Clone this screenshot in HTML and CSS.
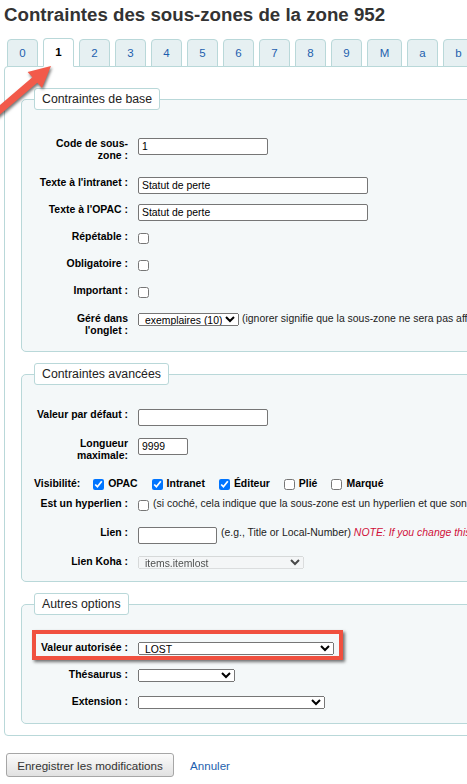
FILE: index.html
```html
<!DOCTYPE html>
<html lang="fr">
<head>
<meta charset="utf-8">
<title>Contraintes des sous-zones</title>
<link rel="stylesheet" href="styles.css">
</head>
<body>
<div class="page">
  <h1 class="title">Contraintes des sous-zones de la zone 952</h1>
  <ul class="tabs">
    <li class="tab">0</li>
    <li class="tab tab-active">1</li>
    <li class="tab">2</li>
    <li class="tab">3</li>
    <li class="tab">4</li>
    <li class="tab">5</li>
    <li class="tab">6</li>
    <li class="tab">7</li>
    <li class="tab">8</li>
    <li class="tab">9</li>
    <li class="tab tab-wide">M</li>
    <li class="tab">a</li>
    <li class="tab">b</li>
    <li class="tab">c</li>
    <li class="tab">d</li>
  </ul>
  <div class="panel">
    <fieldset class="group">
      <legend class="group-title">Contraintes de base</legend>
      <ol class="fields">
        <li class="field h39"><label class="field-label">Code de sous-<br>zone :</label><input class="text w130" type="text" value="1"></li>
        <li class="field"><label class="field-label">Texte à l'intranet :</label><input class="text w230" type="text" value="Statut de perte"></li>
        <li class="field"><label class="field-label">Texte à l'OPAC :</label><input class="text w230" type="text" value="Statut de perte"></li>
        <li class="field"><label class="field-label">Répétable :</label><input class="box" type="checkbox"></li>
        <li class="field"><label class="field-label">Obligatoire :</label><input class="box" type="checkbox"></li>
        <li class="field h28"><label class="field-label">Important :</label><input class="box" type="checkbox"></li>
        <li class="field h38"><label class="field-label">Géré dans<br>l'onglet :</label><select class="menu w101"><option>exemplaires (10)</option></select><span class="hint hint-select">(ignorer signifie que la sous-zone ne sera pas affichée)</span></li>
      </ol>
    </fieldset>
    <fieldset class="group">
      <legend class="group-title">Contraintes avancées</legend>
      <ol class="fields fields-adv">
        <li class="field h29"><label class="field-label">Valeur par défaut :</label><input class="text w130" type="text" value=""></li>
        <li class="field h40"><label class="field-label">Longueur<br>maximale:</label><input class="text w50" type="text" value="9999"></li>
        <li class="field h20">
          <span class="vis-label">Visibilité:</span>
          <label class="opt"><input class="box" type="checkbox" checked>OPAC</label>
          <label class="opt"><input class="box" type="checkbox" checked>Intranet</label>
          <label class="opt"><input class="box" type="checkbox" checked>Éditeur</label>
          <label class="opt"><input class="box" type="checkbox">Plié</label>
          <label class="opt"><input class="box" type="checkbox">Marqué</label>
        </li>
        <li class="field h29"><label class="field-label">Est un hyperlien :</label><input class="box" type="checkbox"><span class="hint">(si coché, cela indique que la sous-zone est un hyperlien et que son contenu sera un lien cliquable)</span></li>
        <li class="field h29"><label class="field-label">Lien :</label><input class="text w79" type="text" value=""><span class="hint">(e.g., Title or Local-Number) <em class="note">NOTE: If you change this value you must ask your administrator to run misc/batchRebuildBiblioTables.pl.</em></span></li>
        <li class="field h25"><label class="field-label">Lien Koha :</label><select class="menu w166" disabled><option>items.itemlost</option></select></li>
      </ol>
    </fieldset>
    <fieldset class="group">
      <legend class="group-title">Autres options</legend>
      <ol class="fields fields-other">
        <li class="field"><label class="field-label">Valeur autorisée :</label><select class="menu w196"><option>LOST</option></select><span class="callout"></span></li>
        <li class="field"><label class="field-label">Thésaurus :</label><select class="menu w97"><option></option></select></li>
        <li class="field"><label class="field-label">Extension :</label><select class="menu w187"><option></option></select></li>
      </ol>
    </fieldset>
  </div>
  <div class="actions">
    <button class="btn" type="button">Enregistrer les modifications</button>
    <a class="cancel" href="#">Annuler</a>
  </div>
  <svg class="arrow" viewBox="0 0 60 65" width="60" height="65" aria-hidden="true">
    <polygon points="51,12 42,34 37.3,28.7 -2.6,62.7 -7.4,57.3 32.4,23.3 27.6,18" fill="#f25a4a"/>
  </svg>
</div>
</body>
</html>
```
FILE: styles.css
```css
html, body {
  margin: 0;
  padding: 0;
  overflow: hidden;
  background: #fff;
}
body {
  font-family: "Liberation Sans", Arial, sans-serif;
  font-size: 10.45px;
  color: #000;
}
.page {
  position: relative;
  width: 1100px;
  padding-left: 4px;
}
.title {
  margin: 4px 0 12px;
  font-size: 18.7px;
  line-height: 22px;
  font-weight: bold;
  color: #333;
}
.tabs {
  display: flex;
  align-items: flex-end;
  gap: 5px;
  list-style: none;
  margin: 0 0 -1px;
  padding: 0 0 0 3px;
  height: 29px;
  position: relative;
  z-index: 1;
}
.tab {
  box-sizing: border-box;
  flex: none;
  width: 31px;
  height: 28px;
  border: 1px solid #b9d8d9;
  border-radius: 4px 4px 0 0;
  background: #e6f0f2;
  text-align: center;
  line-height: 26px;
  font-size: 11.5px;
  color: #1d5fae;
}
.tab-wide { width: 35px; }
.tab-active {
  height: 29px;
  line-height: 27px;
  background: #fff;
  border-bottom-color: #fff;
  color: #000;
  font-weight: bold;
}
.panel {
  width: 900px;
  border: 1px solid #b9d8d9;
  border-radius: 4px;
  padding: 21px 0 11px 16px;
  background: #fff;
}
.group {
  margin: 0 0 11px;
  padding: 0 12px;
  border: 1px solid #b9d8d9;
  border-radius: 5px;
  background: #f4f8f9;
  min-width: 0;
}
.group:last-child { margin-bottom: 0; }
.group-title {
  margin: 0;
  padding: 3px 7px;
  border: 1px solid #b9d8d9;
  border-radius: 3px;
  background: #fff;
  font-size: 12.3px;
  line-height: 14px;
  color: #222;
}
.fields {
  list-style: none;
  margin: 0;
  padding: 28px 0 0;
}
.fields-adv { padding-top: 24px; }
.fields-other { padding-top: 27px; }
.field {
  display: flex;
  align-items: flex-start;
  height: 27px;
  white-space: nowrap;
  position: relative;
}
.h20 { height: 20px; }
.h25 { height: 25px; }
.h28 { height: 28px; }
.h29 { height: 29px; }
.h38 { height: 38px; }
.h39 { height: 39px; }
.h40 { height: 40px; }
.field-label {
  flex: none;
  box-sizing: border-box;
  width: 94px;
  margin-right: 10px;
  text-align: right;
  font-weight: bold;
  line-height: 12px;
}
.text {
  box-sizing: border-box;
  flex: none;
  height: 17px;
  margin: 0;
  padding: 0 3px 1px;
  border: 1px solid #767676;
  border-radius: 2px;
  background: #fff;
  font: 10.4px "Liberation Sans", Arial, sans-serif;
  color: #000;
}
.menu {
  box-sizing: border-box;
  flex: none;
  height: 13px;
  margin: 0;
  padding: 0 0 0 2px;
  font: 10.4px "Liberation Sans", Arial, sans-serif;
  color: #000;
}
.w50 { width: 50px; }
.w79 { width: 79px; }
.w97 { width: 97px; }
.w101 { width: 101px; }
.w130 { width: 130px; }
.w166 { width: 166px; }
.w187 { width: 187px; }
.w196 { width: 196px; }
.w230 { width: 230px; }
.box {
  flex: none;
  width: 11px;
  height: 11px;
  margin: 2px 0 0;
}
.hint {
  margin-left: 4px;
  line-height: 12px;
  color: #222;
}
.hint-select { margin-left: 3px; }
.note {
  color: #d0103a;
  font-style: italic;
}
.vis-label {
  font-weight: bold;
  line-height: 12px;
  margin-right: 13px;
}
.opt {
  display: flex;
  align-items: flex-start;
  margin-right: 14px;
  font-weight: bold;
  line-height: 12px;
}
.opt .box {
  margin: 1px 4px 0 0;
}
.callout {
  position: absolute;
  left: -2px;
  top: -12px;
  width: 311px;
  height: 30px;
  box-sizing: border-box;
  border: 4px solid #f0503f;
  box-shadow: 2px 2px 3px rgba(0, 0, 0, 0.55);
  pointer-events: none;
}
.actions {
  display: flex;
  align-items: baseline;
  gap: 16px;
  margin: 17px 0 0 2px;
}
.btn {
  box-sizing: border-box;
  width: 168px;
  height: 24px;
  padding: 0;
  border: 1px solid #a6a6a6;
  border-radius: 3px;
  background: linear-gradient(#fbfbfb, #e1e1e1);
  font: 11.6px "Liberation Sans", Arial, sans-serif;
  color: #333;
}
.cancel {
  font-size: 11.6px;
  color: #1d5fae;
  text-decoration: none;
}
.arrow {
  position: absolute;
  left: 0;
  top: 50px;
  overflow: visible;
  filter: drop-shadow(1px 2px 1.5px rgba(0, 0, 0, 0.55));
  z-index: 2;
}
```
